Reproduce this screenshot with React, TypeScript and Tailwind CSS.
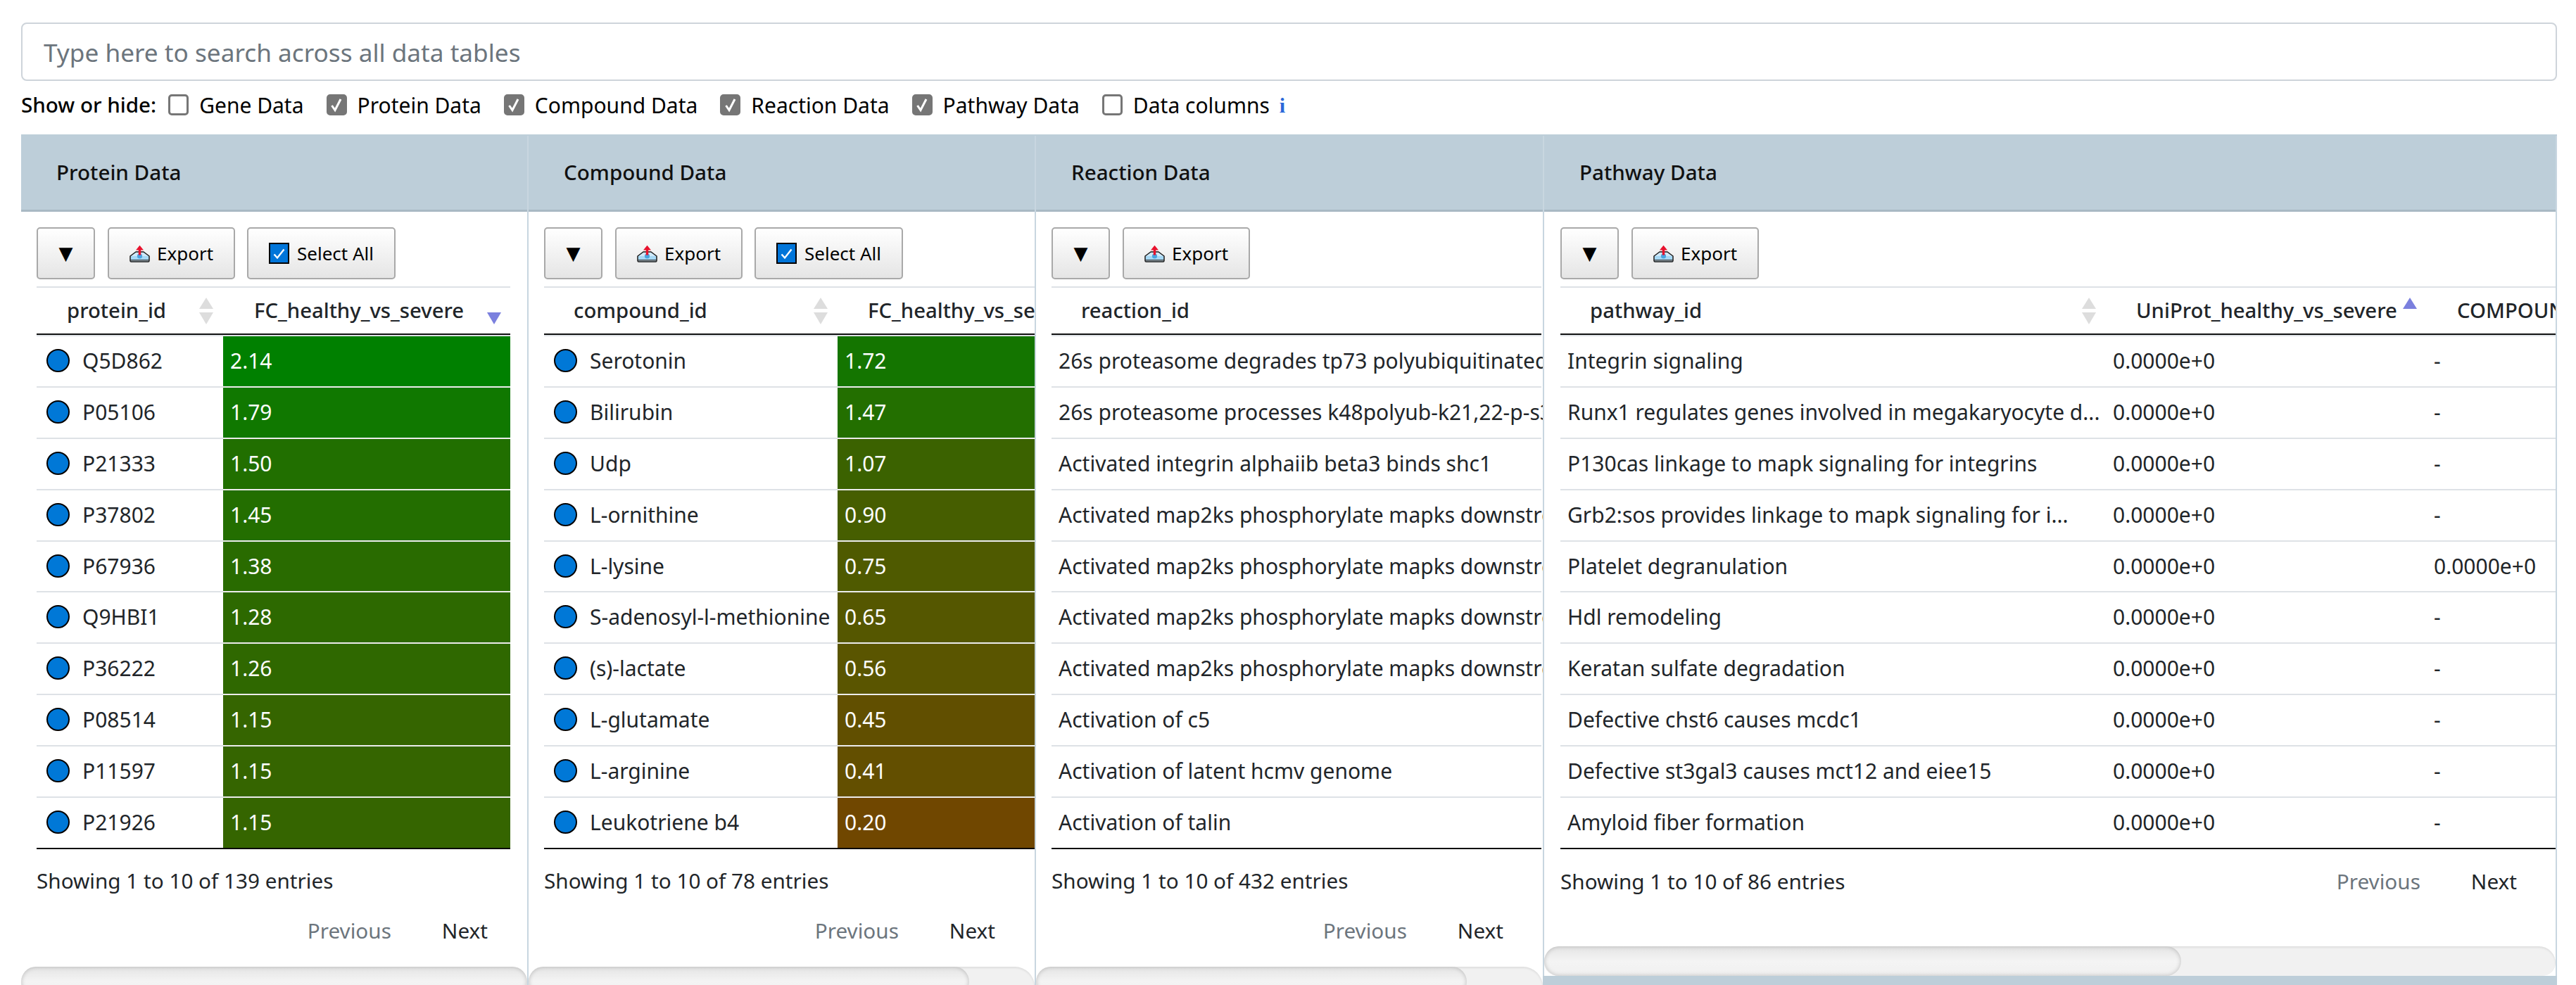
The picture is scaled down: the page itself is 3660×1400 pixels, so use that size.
const proteinRows = [
  ["Q5D862", "2.14", "bg-[#008000]"],
  ["P05106", "1.79", "bg-[#107800]"],
  ["P21333", "1.50", "bg-[#216f00]"],
  ["P37802", "1.45", "bg-[#236e00]"],
  ["P67936", "1.38", "bg-[#296b00]"],
  ["Q9HBI1", "1.28", "bg-[#2d6900]"],
  ["P36222", "1.26", "bg-[#2f6800]"],
  ["P08514", "1.15", "bg-[#356500]"],
  ["P11597", "1.15", "bg-[#356500]"],
  ["P21926", "1.15", "bg-[#356500]"],
];
const compoundRows = [
  ["Serotonin", "1.72", "bg-[#147500]"],
  ["Bilirubin", "1.47", "bg-[#236f00]"],
  ["Udp", "1.07", "bg-[#3b6200]"],
  ["L-ornithine", "0.90", "bg-[#465e00]"],
  ["L-lysine", "0.75", "bg-[#4f5a00]"],
  ["S-adenosyl-l-methionine", "0.65", "bg-[#555700]"],
  ["(s)-lactate", "0.56", "bg-[#5a5500]"],
  ["L-glutamate", "0.45", "bg-[#614f00]"],
  ["L-arginine", "0.41", "bg-[#634f00]"],
  ["Leukotriene b4", "0.20", "bg-[#704700]"],
];
const reactionRows = [
  "26s proteasome degrades tp73 polyubiquitinated protein",
  "26s proteasome processes k48polyub-k21,22-p-s32,36-ikba",
  "Activated integrin alphaiib beta3 binds shc1",
  "Activated map2ks phosphorylate mapks downstream of ras",
  "Activated map2ks phosphorylate mapks downstream of ras",
  "Activated map2ks phosphorylate mapks downstream of ras",
  "Activated map2ks phosphorylate mapks downstream of ras",
  "Activation of c5",
  "Activation of latent hcmv genome",
  "Activation of talin",
];
const pathwayRows = [
  ["Integrin signaling", "-"],
  ["Runx1 regulates genes involved in megakaryocyte d...", "-"],
  ["P130cas linkage to mapk signaling for integrins", "-"],
  ["Grb2:sos provides linkage to mapk signaling for i...", "-"],
  ["Platelet degranulation", "0.0000e+0"],
  ["Hdl remodeling", "-"],
  ["Keratan sulfate degradation", "-"],
  ["Defective chst6 causes mcdc1", "-"],
  ["Defective st3gal3 causes mct12 and eiee15", "-"],
  ["Amyloid fiber formation", "-"],
];

function Sort({ up = true, down = true, active = false }: { up?: boolean; down?: boolean; active?: boolean }) {
  const fill = active ? "#7b80de" : "#dddddd";
  return (
    <svg width="20" height="38" viewBox="0 0 20 38" className="flex-none">
      {up && <polygon points="10,0 20,16 0,16" fill={fill} />}
      {down && <polygon points="0,21 20,21 10,38" fill={fill} />}
    </svg>
  );
}

function ExportIcon() {
  return (
    <svg width="29" height="25" viewBox="0 0 29 25" className="flex-none">
      <path d="M9 10 L1 16 V22.5 Q1 24 2.5 24 H26.5 Q28 24 28 22.5 V16 L20 10 Z" fill="#cfe9f9" stroke="#1a1a1a" strokeWidth="1.5" strokeLinejoin="round" />
      <path d="M2 16 H27 V21 H2 Z" fill="#a6d8f5" />
      <circle cx="14.5" cy="16" r="3.6" fill="#4aa3e0" />
      <path d="M1.5 21.8 H27.5" stroke="#1a1a1a" strokeWidth="1.2" />
      <path d="M14.5 0.8 L20 7.6 H16.2 V14.5 H12.8 V7.6 H9 Z" fill="#e8112d" />
    </svg>
  );
}

function Button({ children, className }: { children: React.ReactNode; className: string }) {
  return (
    <div className={`flex h-[74px] flex-none items-center justify-center rounded-[5px] border-2 border-[#a9a9a9] bg-gradient-to-b from-white to-[#e5e5e5] text-[26px] text-black ${className}`}>
      {children}
    </div>
  );
}

function Toolbar({ selectAll = false }: { selectAll?: boolean }) {
  return (
    <div className="flex h-[74px] items-center">
      <Button className="w-[83px] font-['DejaVu_Sans',sans-serif]">▼</Button>
      <Button className="ml-[18px] w-[181px] gap-[10px]">
        <ExportIcon />
        <span>Export</span>
      </Button>
      {selectAll && (
        <Button className="ml-[17px] w-[211px] gap-[11px]">
          <span className="flex h-[30px] w-[29px] items-center justify-center border-2 border-black bg-[#0075d9]">
            <svg width="19" height="19" viewBox="0 0 19 19">
              <path d="M2.5 10.5 L7 15.5 L16.5 3.5" fill="none" stroke="#fff" strokeWidth="2.4" />
            </svg>
          </span>
          <span>Select All</span>
        </Button>
      )}
    </div>
  );
}

function HeaderRow({ children }: { children: React.ReactNode }) {
  return (
    <div className="mt-[10px] mb-[2px] flex h-[69px] items-center overflow-hidden whitespace-nowrap border-t-2 border-b-2 border-t-[#dee2e6] border-b-[#111111] text-[29.3px] font-medium shadow-[0_2px_0_#dee2e6]">
      {children}
    </div>
  );
}

function Circle() {
  return <span className="mr-[18px] ml-[14px] h-[33px] w-[33px] flex-none rounded-full border-2 border-black bg-[#0078d7]" />;
}

function Row({ last, children }: { last: boolean; children: React.ReactNode }) {
  return (
    <div className={`flex h-[72.9px] items-center whitespace-nowrap pb-[2px] ${last ? "border-b-2 border-[#0a0a0a]" : "border-b-2 border-[#dee2e6]"}`}>
      {children}
    </div>
  );
}

function ColorCell({ value, color, last, className }: { value: string; color: string; last: boolean; className: string }) {
  return (
    <div className={`flex h-[72.9px] items-center pb-[2px] pl-[10px] text-white ${color} ${last ? "border-b-2 border-[#0a0a0a]" : "border-b-2 border-[#ececec]"} ${className}`}>
      {value}
    </div>
  );
}

function Pager() {
  return (
    <div className="flex items-center gap-[72px]">
      <span className="text-[#6c757d]">Previous</span>
      <span>Next</span>
    </div>
  );
}

function Scroll({ thumb, className }: { thumb: string; className: string }) {
  return (
    <div className={`h-[42px] w-full flex-none rounded-t-[28px] bg-[#f1f1f1] shadow-[inset_0_2px_3px_rgba(0,0,0,0.08)] ${className}`}>
      <div className={`h-full rounded-[22px] bg-gradient-to-b from-[#e4e4e4] via-[#f4f4f4] to-[#f0f0f0] shadow-[inset_0_0_6px_rgba(0,0,0,0.22)] ${thumb}`} />
    </div>
  );
}

function Title({ children }: { children: React.ReactNode }) {
  return (
    <div className="flex h-[108px] flex-none items-center border-b-[3px] border-[#a9b9c4] bg-[#bdced9] pl-[50px] text-[29.6px] font-medium text-[#111111]">
      {children}
    </div>
  );
}

function SmallPanelFooter({ text }: { text: string }) {
  return (
    <div className="text-[29.7px]">
      <div className="flex h-[92px] items-center pl-[22px] pb-[2px]">{text}</div>
      <div className="flex h-[48px] items-center justify-end pr-[56px]">
        <Pager />
      </div>
      <div className="h-[27px]" />
    </div>
  );
}

function Check({ label, checked = false }: { label: string; checked?: boolean }) {
  return (
    <label className="mr-[32px] flex items-center gap-[15px] text-black">
      <span className={`flex h-[30px] w-[29px] flex-none items-center justify-center rounded-[5px] border-[3px] border-[#767676] ${checked ? "bg-[#767676]" : "bg-white"}`}>
        {checked && (
          <svg width="20" height="22" viewBox="0 0 20 22">
            <path d="M3.5 12 L8 18.5 L16 3" fill="none" stroke="#fff" strokeWidth="3" />
          </svg>
        )}
      </span>
      <span>{label}</span>
    </label>
  );
}

export default function App() {
  return (
    <div className="h-[1400px] overflow-hidden bg-white pt-[32px] pr-[27px] pl-[30px] font-['Noto_Sans',sans-serif] text-[30px] text-[#212529]">
      <input
        placeholder="Type here to search across all data tables"
        className="h-[83px] w-full rounded-[8px] border-2 border-[#ced4da] bg-white px-[30px] text-[35.2px] outline-none placeholder:text-[#6c757d]"
      />
      <div className="flex h-[76px] items-center pb-[8px] text-black">
        <span className="mr-[17px] text-[29.6px] font-medium">Show or hide:</span>
        <Check label="Gene Data" />
        <Check label="Protein Data" checked />
        <Check label="Compound Data" checked />
        <Check label="Reaction Data" checked />
        <Check label="Pathway Data" checked />
        <Check label="Data columns" />
        <span className="-ml-[18px] font-['Liberation_Serif',serif] font-bold text-[#2a68d8]">i</span>
      </div>

      <div className="flex h-[1209px] items-start overflow-hidden bg-[#bdced9] pt-[2px]">
        {/* Protein */}
        <section className="flex w-[719px] flex-none flex-col bg-white">
          <Title>Protein Data</Title>
          <div className="flex flex-col pt-[22px] pr-[24px] pl-[22px]">
            <Toolbar selectAll />
            <HeaderRow>
              <div className="flex w-[265px] flex-none items-center justify-between pr-[14px] pl-[43px]">
                protein_id
                <Sort />
              </div>
              <div className="flex min-w-0 flex-1 items-center justify-between pr-[13px] pl-[44px]">
                FC_healthy_vs_severe
                <Sort up={false} active />
              </div>
            </HeaderRow>
            {proteinRows.map((r, i) => (
              <div key={r[0]} className="flex">
                <div className="w-[265px] flex-none">
                  <Row last={i === 9}>
                    <Circle />
                    {r[0]}
                  </Row>
                </div>
                <ColorCell value={r[1]} color={r[2]} last={i === 9} className="flex-1" />
              </div>
            ))}
          </div>
          <SmallPanelFooter text="Showing 1 to 10 of 139 entries" />
          <Scroll thumb="w-full" className="" />
        </section>

        {/* Compound */}
        <section className="flex w-[721px] flex-none flex-col overflow-hidden border-l-2 border-[#c8d6e0] bg-white">
          <Title>Compound Data</Title>
          <div className="flex flex-col pt-[22px] pl-[22px]">
            <Toolbar selectAll />
            <HeaderRow>
              <div className="flex w-[417px] flex-none items-center justify-between pr-[14px] pl-[42px]">
                compound_id
                <Sort />
              </div>
              <div className="pl-[43px]">FC_healthy_vs_severe</div>
            </HeaderRow>
            {compoundRows.map((r, i) => (
              <div key={r[0]} className="flex">
                <div className="w-[417px] flex-none">
                  <Row last={i === 9}>
                    <Circle />
                    {r[0]}
                  </Row>
                </div>
                <ColorCell value={r[1]} color={r[2]} last={i === 9} className="flex-1" />
              </div>
            ))}
          </div>
          <SmallPanelFooter text="Showing 1 to 10 of 78 entries" />
          <Scroll thumb="w-[87%]" className="" />
        </section>

        {/* Reaction */}
        <section className="flex w-[722px] flex-none flex-col overflow-hidden border-l-2 border-[#c8d6e0] bg-white">
          <Title>Reaction Data</Title>
          <div className="flex flex-col overflow-hidden pt-[22px] pr-[2px] pl-[22px]">
            <Toolbar />
            <HeaderRow>
              <div className="pl-[42px]">reaction_id</div>
            </HeaderRow>
            {reactionRows.map((t, i) => (
              <Row key={i} last={i === 9}>
                <span className="pl-[10px]">{t}</span>
              </Row>
            ))}
          </div>
          <SmallPanelFooter text="Showing 1 to 10 of 432 entries" />
          <Scroll thumb="w-[85%]" className="" />
        </section>

        {/* Pathway */}
        <section className="flex min-w-0 flex-1 flex-col overflow-hidden border-x-2 border-[#c8d6e0] bg-white">
          <Title>Pathway Data</Title>
          <div className="flex flex-col overflow-hidden pt-[22px] pl-[23px]">
            <Toolbar />
            <HeaderRow>
              <div className="flex w-[778px] flex-none items-center justify-between pr-[17px] pl-[42px]">
                pathway_id
                <Sort />
              </div>
              <div className="flex w-[459px] flex-none items-center justify-between pr-[20px] pl-[40px]">
                UniProt_healthy_vs_severe
                <Sort down={false} active />
              </div>
              <div className="pl-[37px]">COMPOUND_healthy_vs_severe</div>
            </HeaderRow>
            {pathwayRows.map((r, i) => (
              <Row key={r[0]} last={i === 9}>
                <span className="w-[778px] flex-none pl-[10px]">{r[0]}</span>
                <span className="w-[459px] flex-none pl-[7px]">0.0000e+0</span>
                <span className="pl-[4px]">{r[1]}</span>
              </Row>
            ))}
          </div>
          <div className="flex h-[138px] items-start justify-between pt-[24px] pr-[55px] pl-[23px] text-[29.7px]">
            <span>Showing 1 to 10 of 86 entries</span>
            <Pager />
          </div>
          <Scroll thumb="w-[63%]" className="rounded-[22px]" />
        </section>
      </div>
    </div>
  );
}
